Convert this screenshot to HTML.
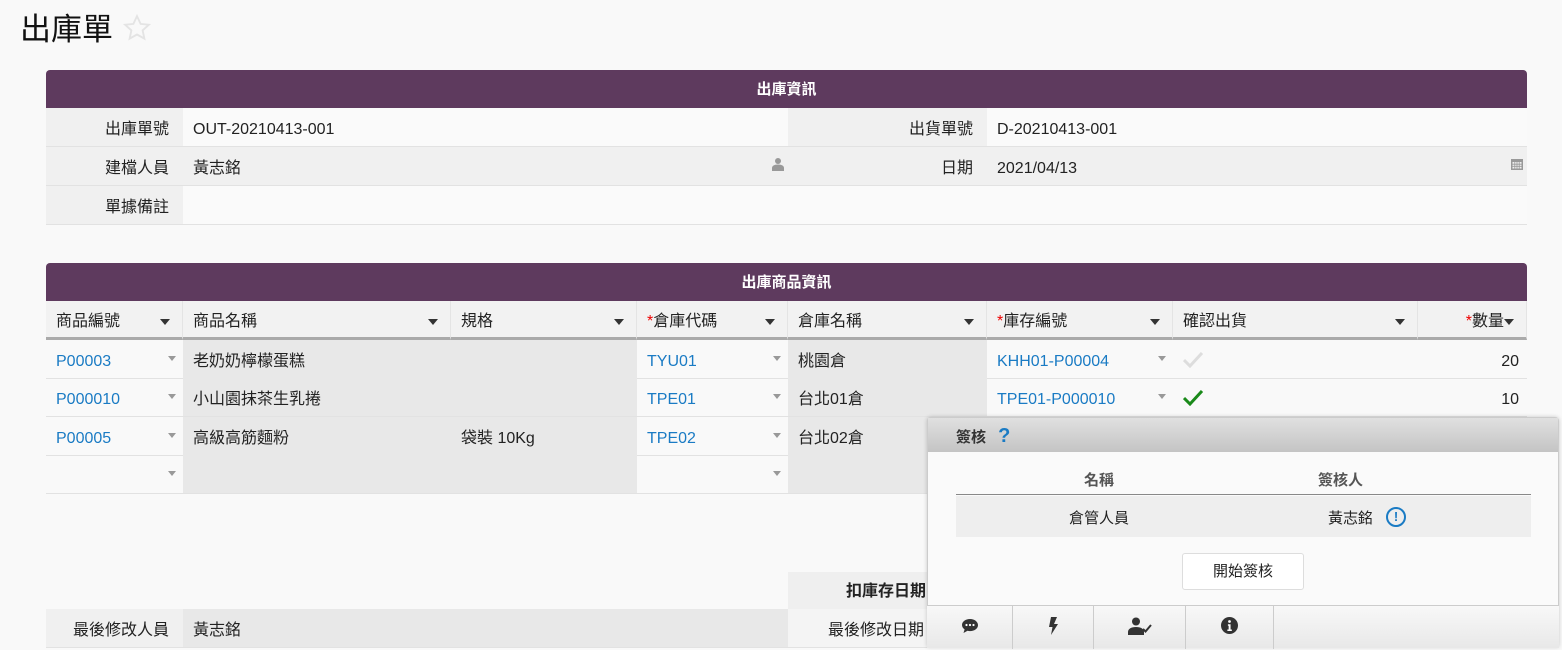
<!DOCTYPE html>
<html><head><meta charset="utf-8"><style>
*{box-sizing:border-box;margin:0;padding:0}
body{width:1562px;height:644px;overflow:hidden;background:#f9f9f9;font-family:"Liberation Sans","Noto Sans CJK TC",sans-serif;font-size:16px;color:#222;position:relative}
.abs{position:absolute}
.hd{background:#5e3a5e;color:#fff;font-weight:bold;font-size:15px;text-align:center;line-height:38px;border-radius:4px 4px 0 0;padding-top:1px}
.cell{position:absolute;line-height:38px;padding-left:10px;padding-top:3px;height:39px;border-bottom:1px solid #e2e2e2;white-space:nowrap}
.lab{background:#f0f0f0;text-align:right;padding-right:14px;padding-left:0}
.g{background:#e8e8e8}
.lnk{color:#1a7bc4}
.th{position:absolute;line-height:38px;padding-left:10px;padding-top:2px;height:39px;background:#f2f2f2;border-bottom:3px solid #aaa;border-right:1px solid #e4e4e4}
.th:after{content:"";position:absolute;right:12px;top:18px;border:5px solid transparent;border-top:6px solid #333;border-bottom:0}
.dd{position:absolute;width:0;height:0;border:4px solid transparent;border-top:5px solid #999;border-bottom:0}
.r{color:#e00}
.tb{position:absolute;top:0;height:43px;border-right:1px solid #ccc;display:flex;align-items:center;justify-content:center;padding-bottom:4px}
</style></head><body>
<div class="abs" style="left:20px;top:8px;font-size:31px;line-height:44px;color:#111">出庫單 <svg width="30" height="30" viewBox="0 0 24 24" style="vertical-align:-3px"><path d="M12 2.5l2.9 6.2 6.6.7-5 4.5 1.4 6.6L12 17.2l-5.9 3.3 1.4-6.6-5-4.5 6.6-.7z" fill="none" stroke="#e4e4e4" stroke-width="1.5"/></svg></div>

<div class="abs hd" style="left:46px;top:70px;width:1481px">出庫資訊</div>
<div class="cell lab" style="left:46px;top:108px;width:137px">出庫單號</div>
<div class="cell" style="left:183px;top:108px;width:605px;background:#fafafa">OUT-20210413-001</div>
<div class="cell lab" style="left:788px;top:108px;width:199px">出貨單號</div>
<div class="cell" style="left:987px;top:108px;width:540px;background:#fafafa">D-20210413-001</div>
<div class="cell lab" style="left:46px;top:147px;width:137px">建檔人員</div>
<div class="cell" style="left:183px;top:147px;width:605px;background:#f0f0f0">黃志銘<svg style="position:absolute;right:4px;top:10px" width="12" height="14" viewBox="0 0 12 14"><circle cx="6" cy="4" r="3" fill="#999"/><path d="M0 14v-3c0-2 2-3.5 6-3.5s6 1.5 6 3.5v3z" fill="#999"/></svg></div>
<div class="cell lab" style="left:788px;top:147px;width:199px">日期</div>
<div class="cell" style="left:987px;top:147px;width:540px;background:#f0f0f0">2021/04/13<svg style="position:absolute;right:4px;top:11px" width="12" height="12" viewBox="0 0 12 12"><rect x="0" y="1" width="12" height="11" fill="#999"/><rect x="1.5" y="4" width="9" height="6.5" fill="#f0f0f0"/><path d="M1.5 6.2h9M1.5 8.3h9M3.8 4v6.5M6 4v6.5M8.2 4v6.5" stroke="#999" stroke-width=".8"/></svg></div>
<div class="cell lab" style="left:46px;top:186px;width:137px">單據備註</div>
<div class="cell" style="left:183px;top:186px;width:1344px;background:#fafafa">&nbsp;</div>

<div class="abs hd" style="left:46px;top:263px;width:1481px">出庫商品資訊</div>
<div class="th" style="left:46px;top:301px;width:137px">商品編號</div>
<div class="th" style="left:183px;top:301px;width:268px">商品名稱</div>
<div class="th" style="left:451px;top:301px;width:186px">規格</div>
<div class="th" style="left:637px;top:301px;width:151px"><span class="r">*</span>倉庫代碼</div>
<div class="th" style="left:788px;top:301px;width:199px">倉庫名稱</div>
<div class="th" style="left:987px;top:301px;width:186px"><span class="r">*</span>庫存編號</div>
<div class="th" style="left:1173px;top:301px;width:245px">確認出貨</div>
<div class="th" style="left:1418px;top:301px;width:109px;text-align:right;padding-right:22px"><span class="r">*</span>數量</div>

<div class="cell lnk" style="left:46px;top:340px;width:137px">P00003</div>
<div class="cell g" style="left:183px;top:340px;width:454px">老奶奶檸檬蛋糕</div>
<div class="cell lnk" style="left:637px;top:340px;width:151px">TYU01</div>
<div class="cell g" style="left:788px;top:340px;width:199px">桃園倉</div>
<div class="cell lnk" style="left:987px;top:340px;width:186px">KHH01-P00004</div>
<div class="cell" style="left:1173px;top:340px;width:354px"><svg style="position:absolute;left:10px;top:12px" width="20" height="16" viewBox="0 0 20 16"><path d="M1 8l6 6L19 1" fill="none" stroke="#ddd" stroke-width="3"/></svg><span style="position:absolute;right:8px">20</span></div>

<div class="cell lnk" style="left:46px;top:378px;width:137px">P000010</div>
<div class="cell g" style="left:183px;top:378px;width:454px">小山園抹茶生乳捲</div>
<div class="cell lnk" style="left:637px;top:378px;width:151px">TPE01</div>
<div class="cell g" style="left:788px;top:378px;width:199px">台北01倉</div>
<div class="cell lnk" style="left:987px;top:378px;width:186px">TPE01-P000010</div>
<div class="cell" style="left:1173px;top:378px;width:354px"><svg style="position:absolute;left:10px;top:12px" width="20" height="16" viewBox="0 0 20 16"><path d="M1 8l6 6L19 1" fill="none" stroke="#1a8a1a" stroke-width="3"/></svg><span style="position:absolute;right:8px">10</span></div>

<div class="cell lnk" style="left:46px;top:417px;width:137px">P00005</div>
<div class="cell g" style="left:183px;top:417px;width:268px">高級高筋麵粉</div>
<div class="cell g" style="left:451px;top:417px;width:186px">袋裝 10Kg</div>
<div class="cell lnk" style="left:637px;top:417px;width:151px">TPE02</div>
<div class="cell g" style="left:788px;top:417px;width:199px">台北02倉</div>

<div class="cell" style="left:46px;top:455px;width:137px">&nbsp;</div>
<div class="cell g" style="left:183px;top:455px;width:454px">&nbsp;</div>
<div class="cell" style="left:637px;top:455px;width:151px">&nbsp;</div>
<div class="cell g" style="left:788px;top:455px;width:199px">&nbsp;</div>

<div class="dd" style="left:168px;top:356px"></div><div class="dd" style="left:168px;top:394px"></div><div class="dd" style="left:168px;top:433px"></div><div class="dd" style="left:168px;top:471px"></div>
<div class="dd" style="left:773px;top:356px"></div><div class="dd" style="left:773px;top:394px"></div><div class="dd" style="left:773px;top:433px"></div><div class="dd" style="left:773px;top:471px"></div>
<div class="dd" style="left:1158px;top:356px"></div><div class="dd" style="left:1158px;top:394px"></div>

<div class="abs" style="left:788px;top:572px;width:160px;height:37px;background:#efefef;line-height:40px;font-weight:bold;text-align:right;padding-left:58px;overflow:hidden;white-space:nowrap;text-align:left">扣庫存日期</div>
<div class="cell lab" style="left:46px;top:609px;width:137px">最後修改人員</div>
<div class="cell g" style="left:183px;top:609px;width:605px">黃志銘</div>
<div class="cell lab" style="left:788px;top:609px;width:160px;background:#f4f4f4;text-align:left;padding-left:40px;overflow:hidden">最後修改日期</div>

<div class="abs" style="left:927px;top:417px;width:632px;height:230px;background:#fafafa;border:1px solid #ccc;border-radius:4px 4px 0 0;box-shadow:0 0 4px rgba(0,0,0,.2)">
 <div style="height:34px;background:linear-gradient(#e0e0e0,#c4c4c4);line-height:36px;padding-left:28px;font-weight:bold;font-size:15px;color:#333">簽核 <span style="color:#1a7bc4;font-size:20px;margin-left:8px">?</span></div>
 <div style="position:absolute;left:28px;top:43px;width:575px;height:34px;border-bottom:1px solid #888;font-weight:bold;color:#555;font-size:15px">
  <span style="position:absolute;left:128px;top:8px">名稱</span><span style="position:absolute;left:362px;top:8px">簽核人</span></div>
 <div style="position:absolute;left:28px;top:78px;width:575px;height:41px;background:#eee;font-size:15px">
  <span style="position:absolute;left:113px;top:11px">倉管人員</span><span style="position:absolute;left:372px;top:11px">黃志銘</span>
  <span style="position:absolute;left:430px;top:11px;width:20px;height:20px;border:2px solid #1a7bc4;border-radius:50%;color:#1a7bc4;font-weight:bold;font-size:13px;text-align:center;line-height:16px">!</span></div>
 <div style="position:absolute;left:254px;top:135px;width:122px;height:37px;background:#fff;border:1px solid #ddd;border-radius:3px;text-align:center;line-height:36px;font-size:15px">開始簽核</div>
 <div style="position:absolute;left:-1px;top:187px;width:632px;height:43px;background:linear-gradient(#f8f8f8,#e8e8e8);border-top:1px solid #ccc">
  <span class="tb" style="left:0;width:86px"><svg width="18" height="16" viewBox="0 0 18 16"><path d="M9 1C4.5 1 1 3.7 1 7c0 1.8 1 3.3 2.6 4.4L2.5 15l4-2.2c.8.2 1.6.3 2.5.3 4.5 0 8-2.7 8-6S13.5 1 9 1z" fill="#333"/><circle cx="5.5" cy="7" r="1.1" fill="#fff"/><circle cx="9" cy="7" r="1.1" fill="#fff"/><circle cx="12.5" cy="7" r="1.1" fill="#fff"/></svg></span>
  <span class="tb" style="left:86px;width:81px"><svg width="10" height="18" viewBox="0 0 10 18"><path d="M3 0h6L6 7h4L3 18l1.5-8H1z" fill="#333"/></svg></span>
  <span class="tb" style="left:167px;width:92px"><svg width="24" height="18" viewBox="0 0 24 18"><circle cx="8" cy="4.5" r="4" fill="#333"/><path d="M0 18v-3c0-3 3-5 8-5s8 2 8 5v3z" fill="#333"/><path d="M15 12l2.5 2.5L23 8" fill="none" stroke="#333" stroke-width="2"/></svg></span>
  <span class="tb" style="left:259px;width:88px"><svg width="17" height="17" viewBox="0 0 16 16"><circle cx="8" cy="8" r="8" fill="#333"/><circle cx="8" cy="4.2" r="1.3" fill="#fff"/><path d="M6.5 6.8h2.5v5h1.2v1.4H6v-1.4h1.2V8.2h-.7z" fill="#fff"/></svg></span>
 </div>
</div>
</body></html>
